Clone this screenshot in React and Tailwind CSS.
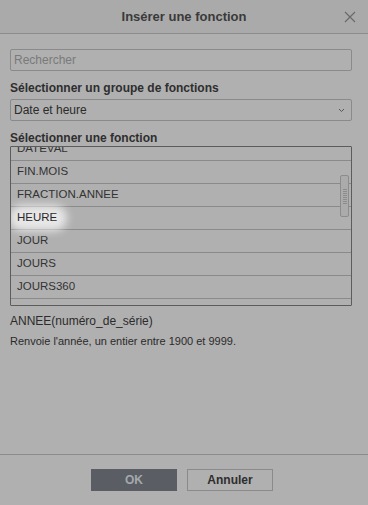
const ROWS = ["DATEVAL", "FIN.MOIS", "FRACTION.ANNEE", "HEURE", "JOUR", "JOURS", "JOURS360", ""];

export default function App() {
  return (
    <div
      className="w-[368px] h-[505px] bg-[#b0b0b0] flex flex-col text-[#2b2b2b] overflow-hidden"
      style={{ fontFamily: '"Liberation Sans", Arial, sans-serif' }}
    >
      <div className="h-[34px] shrink-0 bg-[#aaaaaa] border-b border-[#8c8c8c] flex items-center justify-center relative">
        <span className="text-[13px] font-bold text-[#3a3a3a]">Insérer une fonction</span>
        <svg className="absolute right-[12px] top-[11px]" width="12" height="12" viewBox="0 0 12 12">
          <path d="M1 1L11 11M11 1L1 11" stroke="#6a6a6a" strokeWidth="1.2" fill="none" />
        </svg>
      </div>

      <div className="flex-1 pl-[10px] pr-[16px] pt-[15px] flex flex-col">
        <div className="h-[22px] border border-[#8a8a8a] rounded-[2px] flex items-center px-[3px] text-[12px] text-[#7a7a7a]">
          Rechercher
        </div>

        <div className="mt-[10px] text-[12px] font-bold text-[#2e2e2e] leading-[14px]">
          Sélectionner un groupe de fonctions
        </div>
        <div className="mt-[4px] h-[22px] border border-[#8a8a8a] rounded-[2px] flex items-center justify-between pl-[3px] pr-[6px] text-[12px] text-[#2b2b2b]">
          <span>Date et heure</span>
          <svg width="7" height="5" viewBox="0 0 7 5">
            <path d="M1 1L3.5 3.5L6 1" stroke="#555" strokeWidth="1" fill="none" />
          </svg>
        </div>

        <div className="mt-[10px] text-[12px] font-bold text-[#2e2e2e] leading-[14px]">
          Sélectionner une fonction
        </div>
        <div className="mt-[1px] h-[160px] border border-[#5c5c5c] rounded-[1px] relative overflow-hidden">
          <div className="-mt-[9px]">
            {ROWS.map((r, i) => (
              <div
                key={i}
                className="h-[23px] border-b border-[#8a8a8a] flex items-center pl-[6px] text-[11.5px] text-[#333]"
              >
                {r === "HEURE" ? (
                  <span className="relative">
                    <span className="absolute -left-[8px] -right-[10px] -top-[4px] -bottom-[4px] bg-white/70 blur-[4px] rounded-full" />
                    <span className="relative text-[#2a2a2a]">{r}</span>
                  </span>
                ) : (
                  r
                )}
              </div>
            ))}
          </div>
          <div className="absolute right-[2px] top-[28px] w-[9px] h-[42px] border border-[#8c8c8c] rounded-[2px] bg-[#ababab] flex flex-col items-center justify-center gap-[1px]">
            {[0, 1, 2, 3, 4, 5, 6, 7].map((k) => (
              <div key={k} className="w-[4px] h-px bg-[#8c8c8c]" />
            ))}
          </div>
        </div>

        <div className="mt-[8px] text-[12px] text-[#2b2b2b] leading-[14px]">ANNEE(numéro_de_série)</div>
        <div className="mt-[6px] text-[11px] text-[#2b2b2b] leading-[14px]">
          Renvoie l'année, un entier entre 1900 et 9999.
        </div>
      </div>

      <div className="h-[51px] shrink-0 border-t border-[#8c8c8c] flex justify-center items-start pt-[14px] pr-[4px] gap-[10px]">
        <div className="w-[86px] h-[22px] bg-[#5a5d63] flex items-center justify-center text-[12px] font-bold text-[#a3a9ae]">
          OK
        </div>
        <div className="w-[86px] h-[22px] border border-[#8a8a8a] flex items-center justify-center text-[12px] font-bold text-[#2e2e2e]">
          Annuler
        </div>
      </div>
    </div>
  );
}
